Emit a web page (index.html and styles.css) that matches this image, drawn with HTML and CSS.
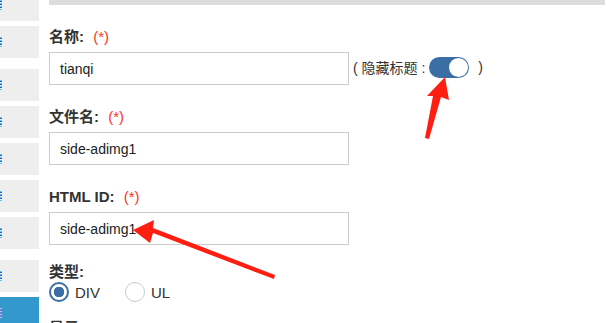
FILE: index.html
```html
<!DOCTYPE html>
<html lang="en">
<head>
    <meta charset="utf-8">
    <title>模块设置</title>
    <link rel="stylesheet" href="styles.css">
</head>
<body>
<div id="container">
    <div id="side">
        <div class="side-item first"><span class="mark"></span></div>
        <div class="side-item"><span class="mark"></span></div>
        <div class="side-item wide-gap"><span class="mark"></span></div>
        <div class="side-item"><span class="mark"></span></div>
        <div class="side-item"><span class="mark"></span></div>
        <div class="side-item"><span class="mark"></span></div>
        <div class="side-item"><span class="mark"></span></div>
        <div class="side-item wide-gap"><span class="mark"></span></div>
        <div class="side-item active"><span class="mark"></span></div>
    </div>

    <div id="main">
        <div class="top-bar"></div>

        <form id="form">
            <div class="field">
                <div class="label">名称: <span class="req">(*)</span></div>
                <div class="line">
                    <input type="text" class="text" value="tianqi"/>
                    <span class="hide-title">( 隐藏标题 :
                        <span class="switch"><span class="knob"></span></span>
                        )</span>
                </div>
            </div>
            <div class="field">
                <div class="label">文件名: <span class="req">(*)</span></div>
                <input type="text" class="text" value="side-adimg1"/>
            </div>
            <div class="field short">
                <div class="label">HTML ID: <span class="req">(*)</span></div>
                <input type="text" class="text" value="side-adimg1"/>
            </div>
            <div class="field choice">
                <div class="label">类型:</div>
                <div class="radios">
                    <label class="radio"><span class="dot checked"></span>DIV</label>
                    <label class="radio"><span class="dot"></span>UL</label>
                </div>
            </div>
            <div class="field">
                <div class="label">显示:</div>
            </div>
        </form>
    </div>
</div>

<svg id="marks" width="606" height="323" viewBox="0 0 606 323">
    <!-- arrow to the switch -->
    <polygon points="425,138 433,96 427,96 445,77 449,100 441,97 429,139" fill="#ff1f12"/>
    <!-- arrow to the html id -->
    <polygon points="274,279 153,233 150,243 133,230 154,220 153,228 275,275" fill="#ff1f12"/>
</svg>
</body>
</html>
```

FILE: styles.css
```css
html {
    overflow: hidden;
}

body {
    overflow: hidden;
    margin: 0;
    padding: 0;
    width: 606px;
    height: 323px;
    background: white;
    font-family: "Liberation Sans", "Noto Sans CJK SC", sans-serif;
    color: #333;
    position: relative;
}

#container {
    display: flex;
    height: 100%;
}

#side {
    width: 39px;
    margin-right: 10px;
    flex-shrink: 0;
}

.side-item {
    height: 32px;
    margin-top: 5px;
    background: #eeeeee;
    overflow: hidden;
    display: flex;
    align-items: center;
}

.side-item.first {
    margin-top: -11px;
}

.side-item.wide-gap {
    margin-top: 11px;
}

.side-item.active {
    background: #3399cc;
}

.mark {
    width: 2px;
    height: 10px;
    background: repeating-linear-gradient(to bottom, #5bc8e8 0, #5bc8e8 1px, #2b5fb8 1px, #2b5fb8 2px, transparent 2px, transparent 3px);
}

.active .mark {
    background: repeating-linear-gradient(to bottom, #c9b6f0 0, #c9b6f0 1px, #8a6fd0 1px, #8a6fd0 2px, transparent 2px, transparent 3px);
}

#main {
    flex: 1;
    padding-right: 1px;
}

.top-bar {
    height: 5px;
    background: #dddddd;
}

#form {
    padding-top: 22px;
}

.field {
    margin-bottom: 22px;
}

.field.short {
    margin-bottom: 17px;
}

.field.choice {
    margin-bottom: 16px;
}

.label {
    font-size: 15px;
    font-weight: bold;
    line-height: 20px;
    margin-bottom: 5px;
    color: #333;
}

.req {
    color: #ff3322;
    font-weight: normal;
    margin-left: 5px;
}

.line {
    display: flex;
    align-items: center;
}

.text {
    box-sizing: border-box;
    width: 300px;
    height: 33px;
    border: 1px solid #cccccc;
    padding: 0 10px;
    margin: 0;
    font-family: "Liberation Sans", "Noto Sans CJK SC", sans-serif;
    font-size: 14px;
    color: #222;
    outline: none;
}

.hide-title {
    margin-left: 4px;
    font-size: 14px;
    color: #333;
    display: flex;
    align-items: center;
    gap: 3px;
    margin-top: -3px;
}

.switch {
    width: 40px;
    height: 21px;
    border-radius: 11px;
    background: #3a6ea5;
    margin: 0 6px 0 1px;
    display: flex;
    justify-content: flex-end;
    align-items: center;
    padding: 0 1px;
    box-sizing: border-box;
}

.knob {
    width: 19px;
    height: 19px;
    border-radius: 50%;
    background: white;
}

.radios {
    display: flex;
    gap: 25px;
    margin-top: -5px;
}

.radio {
    display: flex;
    align-items: center;
    font-size: 15px;
    color: #333;
}

.dot {
    box-sizing: border-box;
    width: 20px;
    height: 20px;
    border-radius: 50%;
    border: 1px solid #cccccc;
    margin-right: 6px;
    background: white;
}

.dot.checked {
    border: 2px solid #3a6ea5;
    background: radial-gradient(circle, #3a6ea5 0, #3a6ea5 5px, white 5.5px);
}

#marks {
    position: absolute;
    left: 0;
    top: 0;
}
```
